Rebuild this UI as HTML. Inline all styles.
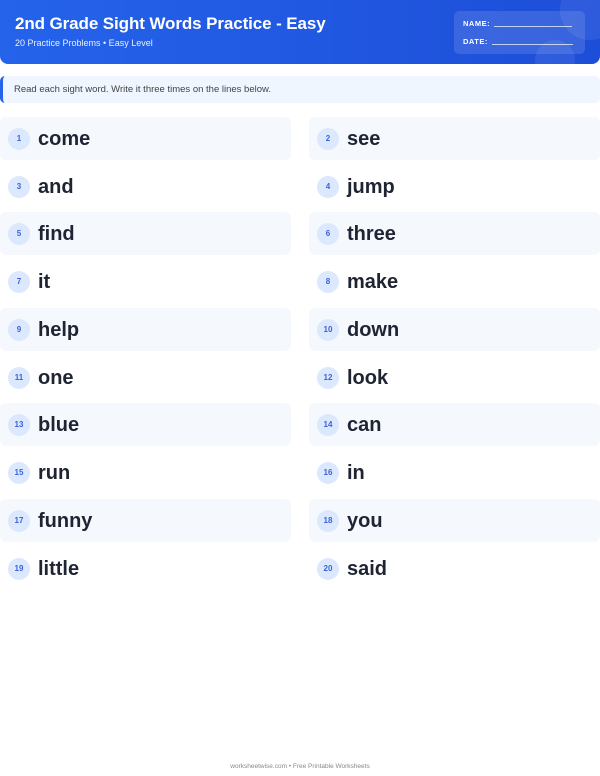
<!DOCTYPE html>
<html><head><meta charset="utf-8"><style>
*{margin:0;padding:0;box-sizing:border-box}
body{width:600px;height:776px;background:#fff;font-family:"Liberation Sans",Arial,sans-serif;position:relative;overflow:hidden}
.hdr{position:absolute;left:0;top:0;width:600px;height:64px;background:linear-gradient(90deg,#2563eb,#1d4ed8);border-radius:0 0 8px 8px;overflow:hidden;color:#fff}
.hdr h1{position:absolute;left:15px;top:14px;font-size:17px;font-weight:bold;letter-spacing:-0.1px}
.hdr .sub{position:absolute;left:15px;top:38px;font-size:9px;opacity:.9}
.c1{position:absolute;left:560px;top:-20px;width:60px;height:60px;border-radius:50%;background:rgba(255,255,255,.08)}
.c2{position:absolute;left:535px;top:40px;width:40px;height:40px;border-radius:50%;background:rgba(255,255,255,.08)}
.box{position:absolute;left:454px;top:11px;width:131px;height:43px;background:rgba(255,255,255,.12);border-radius:5px;font-size:7.5px;font-weight:bold;letter-spacing:.5px}
.box div{position:absolute;left:9px}
.box span{display:inline-block;border-bottom:1px solid rgba(255,255,255,.7);width:78px;margin-left:4px;vertical-align:-1px}
.ins{position:absolute;left:0;top:76px;width:600px;height:27px;background:#eff6ff;border-left:3px solid #2563eb;border-radius:5px;font-size:9.5px;color:#444;padding:8px 0 0 11px}
.card{position:absolute;width:291px;height:43px;border-radius:6px}
.card.f{background:#f5f8fd}
.b{position:absolute;left:8px;top:11px;width:22px;height:22px;border-radius:50%;background:#dbe8fd;color:#3b63d9;font-size:8px;font-weight:bold;text-align:center;line-height:22px}
.w{position:absolute;left:38px;top:11px;font-size:20px;font-weight:bold;color:#1f2433}
.ft{position:absolute;top:763px;width:600px;text-align:center;font-size:6.5px;color:#888}
</style></head><body>
<div class="hdr"><div class="c1"></div><div class="c2"></div>
<h1>2nd Grade Sight Words Practice - Easy</h1>
<div class="sub">20 Practice Problems • Easy Level</div>
<div class="box"><div style="top:8px">NAME:<span></span></div><div style="top:26px">DATE:<span style="width:81px"></span></div></div>
</div>
<div class="ins">Read each sight word. Write it three times on the lines below.</div>

<div class="card f" style="left:0;top:117px"><div class="b">1</div><div class="w">come</div></div>
<div class="card f" style="left:309px;top:117px"><div class="b">2</div><div class="w">see</div></div>
<div class="card" style="left:0;top:165px"><div class="b">3</div><div class="w">and</div></div>
<div class="card" style="left:309px;top:165px"><div class="b">4</div><div class="w">jump</div></div>
<div class="card f" style="left:0;top:212px"><div class="b">5</div><div class="w">find</div></div>
<div class="card f" style="left:309px;top:212px"><div class="b">6</div><div class="w">three</div></div>
<div class="card" style="left:0;top:260px"><div class="b">7</div><div class="w">it</div></div>
<div class="card" style="left:309px;top:260px"><div class="b">8</div><div class="w">make</div></div>
<div class="card f" style="left:0;top:308px"><div class="b">9</div><div class="w">help</div></div>
<div class="card f" style="left:309px;top:308px"><div class="b">10</div><div class="w">down</div></div>
<div class="card" style="left:0;top:356px"><div class="b">11</div><div class="w">one</div></div>
<div class="card" style="left:309px;top:356px"><div class="b">12</div><div class="w">look</div></div>
<div class="card f" style="left:0;top:403px"><div class="b">13</div><div class="w">blue</div></div>
<div class="card f" style="left:309px;top:403px"><div class="b">14</div><div class="w">can</div></div>
<div class="card" style="left:0;top:451px"><div class="b">15</div><div class="w">run</div></div>
<div class="card" style="left:309px;top:451px"><div class="b">16</div><div class="w">in</div></div>
<div class="card f" style="left:0;top:499px"><div class="b">17</div><div class="w">funny</div></div>
<div class="card f" style="left:309px;top:499px"><div class="b">18</div><div class="w">you</div></div>
<div class="card" style="left:0;top:547px"><div class="b">19</div><div class="w">little</div></div>
<div class="card" style="left:309px;top:547px"><div class="b">20</div><div class="w">said</div></div>

<div class="ft">worksheetwise.com • Free Printable Worksheets</div>
</body></html>
